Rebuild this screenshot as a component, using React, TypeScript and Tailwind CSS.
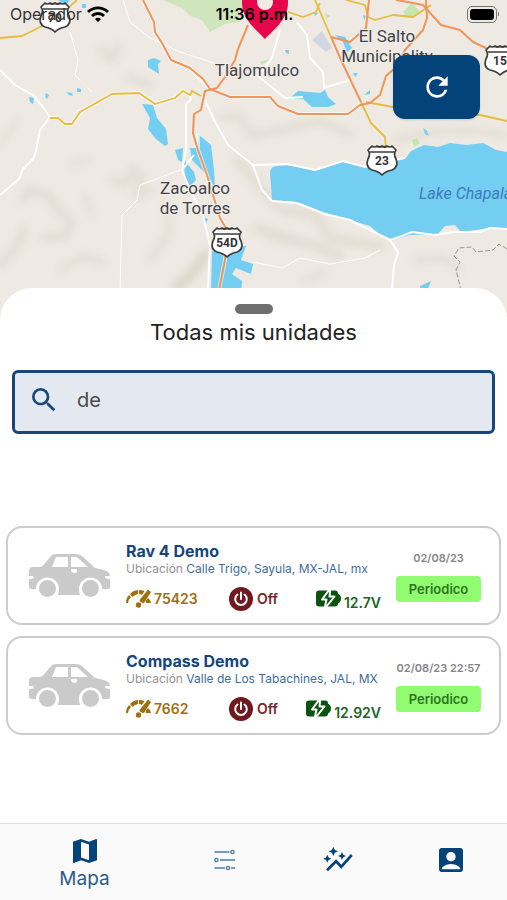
import React, { useState } from 'react';
import { MdAccountBox, MdAutoGraph, MdMap, MdRefresh, MdSearch, MdWifi } from 'react-icons/md';

interface Unit {
  id: number;
  name: string;
  location: string;
  odometer: string;
  engine: string;
  voltage: string;
  date: string;
  status: string;
}

const units: Unit[] = [
  { id: 1, name: 'Rav 4 Demo', location: 'Calle Trigo, Sayula, MX-JAL, mx', odometer: '75423', engine: 'Off', voltage: '12.7V', date: '02/08/23', status: 'Periodico' },
  { id: 2, name: 'Compass Demo', location: 'Valle de Los Tabachines, JAL, MX', odometer: '7662', engine: 'Off', voltage: '12.92V', date: '02/08/23 22:57', status: 'Periodico' },
];

function Shield({ x, y, label }: { x: number; y: number; label: string }) {
  return (
    <g transform={`translate(${x} ${y})`}>
      <path
        d="M-10-14 Q-8-12-5-14 Q-2.500-12 0-14 Q2.500-12 5-14 Q8-12 10-14 L14-10 Q11-6 14-1 Q17 7 10 10 Q4 11 0 15 Q-4 11-10 10 Q-17 7-14-1 Q-11-6-14-10 Z"
        fill="#fff"
        stroke="#3b3b3b"
        strokeWidth="1.700"
        strokeLinejoin="round"
      />
      <path d="M-12-8H12" stroke="#3b3b3b" strokeWidth="1.500" />
      <text y="5" textAnchor="middle" fontSize="12" fontWeight="700" fill="#333">{label}</text>
    </g>
  );
}

function MapView() {
  return (
    <svg
      viewBox="0 0 507 320"
      preserveAspectRatio="xMidYMin slice"
      className="block w-full h-full font-[Roboto,sans-serif]"
      role="img"
      aria-label="Mapa"
    >
      <defs>
        <filter id="soft" x="-20%" y="-20%" width="140%" height="140%">
          <feGaussianBlur stdDeviation="4" />
        </filter>
      </defs>
      <rect width="507" height="320" fill="#eee9e2" />

      {/* terrain */}
      <g filter="url(#soft)" fill="none" stroke="#dad6c8" strokeLinecap="round" strokeLinejoin="round" opacity="0.6">
        <path d="M100 48 L112 60 L120 45 M128 78 L150 84" strokeWidth="7" />
        <path d="M22 200 L30 190 L48 196 L60 212 L72 222 L64 236 L44 238 M0 265 L18 245 L24 228" strokeWidth="8" />
        <path d="M112 180 L125 185 L132 168 L142 178 L136 196 L150 190" strokeWidth="7" />
        <path d="M60 270 L84 256 L104 262 M150 260 L170 232 L166 205" strokeWidth="6" />
        <path d="M222 118 L240 116 L252 136 L280 130 L320 122 L350 134" strokeWidth="7" />
        <path d="M238 160 L258 185 L282 210 L315 215 L330 238 L380 246 M270 236 L310 244 L340 256 M256 228 L290 238" strokeWidth="9" />
        <path d="M176 288 L190 276 L206 254" strokeWidth="9" stroke="#c9c5b0" />
        <path d="M415 260 L445 258 L460 270 M305 280 L325 272 M395 140 L430 132 L470 130 L507 136 M380 180 L400 158" strokeWidth="6" />
        <path d="M0 145 L18 120 M70 165 L90 160 M85 195 L92 215" strokeWidth="5" />
      </g>
      <path d="M163 0 H243 L240 22 L225 24 L210 32 L202 20 L190 16 L182 8 Z" fill="#cfe5bb" />
      <path d="M403 12 L412 3 L420 12 L408 18 Z M325 13 l5 3 l-4 3 Z M412 140 l5-2 l3 5 l-6 4 Z M260 62 l10-3 l-8 6 Z" fill="#c5e5ae" />
      <path d="M312 40 L322 31 L332 48 L326 52 Z" fill="#d2d6e2" />

      {/* water */}
      <g fill="#74cef1">
        <path d="M270 172 Q271 166 277 166 L287 165 L315 170 L343 162 L365 167 L380 164 L406 158 L411 151 L424 145 L438 147 L450 143 L466 145 L483 143 L496 150 L507 152 V229 L490 228 L461 232 L455 225 L445 226 L438 234 L410 235 L390 241 L380 235 L370 226 L325 213 L297 202 L272 200 Z" />
        <path d="M148 60 L154 58 L161 61 L158 64 L159 74 L148 67 Z" />
        <path d="M142 104 L153 105 L157 118 L166 129 L168 144 L165 146 L156 139 L148 129 L150 118 Z" />
        <path d="M175 150 L183 148 L182 162 L178 160 Z M184 160 L194 172 L196 180 L190 186 L185 178 Z M198 134 L211 145 L214 170 L215 188 L209 178 L202 170 L192 160 L190 148 L198 148 Z" />
        <path d="M212 252 L220 248 L246 246 L241 260 L253 264 L251 274 L236 268 L232 274 L242 281 L241 292 H211 Z" />
        <path d="M290 98 L298 91 L320 93 L325 90 L328 97 L336 104 L328 107 L312 107 L303 99 Z" />
        <path d="M29 97 l5 1 l-1 6 l-3-2 Z M46 93 l3 2 l-2 4 l-2-2 Z M66 92 l6 1 l1 3 l-4-1 Z M77 88 l4 1 l0 3 l-4 0 Z M58 0 H70 L66 5 Z M82 4 h4 v4 h-4 Z" />
        <path d="M335 35 L345 37 L352 48 L347 52 L343 42 Z M314 13 l4 0 l-3 3 Z M363 15 l3 1 l-2 4 Z M285 50 l4 0 l0 4 l-3-1 Z M353 73 l5 0 l-3 4 Z M364 95 l6-5 l0 4 Z M423 128 l4 3 l2 5 l-4-2 Z M420 286 L431 281 L428 289 L420 290 Z M204 217 l4 2 l-2 4 l-2-3 Z" />
      </g>

      {/* minor roads */}
      <g fill="none" stroke="#fff" strokeWidth="2" strokeLinejoin="round">
        <path d="M0 70 L15 85 L33 95 L43 107 L50 117 L40 130 L36 150 L34 158 L22 170 L20 178 L0 195" />
        <path d="M190 96 L191 100 L186 104 L186 150 L182 170 L190 190 L203 215 L210 245 L208 290" />
        <path d="M205 100 L213 118 L228 145 L253 165 L262 190 L272 201 L297 203 L325 214 L350 220 L370 230 L390 240 L402 236 L412 232 L435 235 L453 232 L480 232 L490 228 L507 229" />
        <path d="M253 165 L287 164 L315 170 L343 161 L365 167 L385 162 L405 158" />
        <path d="M390 240 L398 252 L394 265 L392 290 M280 30 L272 58 L258 76 L285 98 L303 97" />
        <path d="M297 22 L307 35 L310 58 L323 72 L324 88 L350 80 M182 170 L194 155" />
        <path d="M123 0 L130 22 L150 38 L180 52 L220 65 M70 32 L78 60 L75 75 L92 92" strokeWidth="1" />
        <path d="M120 290 L122 215 L137 200 L140 185 L180 170 M253 262 L282 268 L300 258 L330 264 L365 258 L380 250" strokeWidth="1" />
      </g>
      <path d="M507 249 L499 244 L493 250 L476 252 L472 247 L459 248 L454 256 L460 262 L456 270 L461 290" fill="none" stroke="#9a9894" strokeDasharray="5 2" />

      {/* highways */}
      <g fill="none" stroke="#fff" strokeWidth="4" strokeLinejoin="round" opacity="0.6">
        <path d="M143 0 L154 22 L155 32 L171 60 L190 68 L210 89 L230 97 H270 L278 106 L298 114 H348 L360 105" />
        <path d="M50 118 H58 L65 124 H72 L80 112 L112 94 L139 93 L155 104 L175 98 L183 91 L190 95" />
        <path d="M198 134 L198 150 L207 175 L213 195 L220 218 L227 230 L225 260 L219 290" />
      </g>
      <g fill="none" stroke="#e6bd3c" strokeWidth="1.800" strokeLinejoin="round">
        <path d="M0 38 L22 36 L40 27 L60 15 L77 0" />
        <path d="M50 118 H58 L65 124 H72 L80 112 L112 94 L139 93 L155 104 L175 98 L183 91 L190 95 L192 91 L201 96" />
        <path d="M288 12 L303 17 L316 12 L320 3 M346 0 L365 5 L368 17 L375 20 L393 15 L413 17 L431 5" />
        <path d="M315 0 L331 37 M361 102 L371 123 L385 137 L386 150 M366 102 L393 107 L480 115 L507 121" />
      </g>
      <g fill="none" stroke="#f09557" strokeWidth="2" strokeLinejoin="round">
        <path d="M143 0 L154 22 L155 32 L162 43 L171 60 L190 68 L203 79 L210 89 L230 97 H270 L278 106 L298 114 H348 L360 105 L370 103 L380 95 L386 76 L395 68 L405 50 L423 30 L427 18 L426 0" />
        <path d="M248 25 L238 49 L235 60 L225 77 L217 88 L205 91 L201 110 L194 114 L193 133 L198 150 L207 175 L213 195 L220 218 L227 230 L225 260 L219 290" />
        <path d="M331 37 L341 60 L361 102 M331 37 L350 42 L366 28 L369 0" />
        <path d="M396 0 L408 2 L423 5 L441 25 L460 30 L473 42 L488 49" />
      </g>

      <g fill="#41424a" stroke="#f3efe9" strokeWidth="2" paintOrder="stroke" fontSize="17" textAnchor="middle">
        <text x="257" y="76">Tlajomulco</text>
        <text x="387" y="42">El Salto</text>
        <text x="387" y="62">Municipality</text>
        <text x="195" y="194">Zacoalco</text>
        <text x="195" y="214">de Torres</text>
      </g>
      <text x="419" y="199" fontSize="16" fontStyle="italic" fill="#3f79bd">Lake Chapala</text>

      <Shield x={55} y={17} label="70" />
      <Shield x={382} y={160} label="23" />
      <Shield x={227} y={242} label="54D" />
      <Shield x={500} y={60} label="15" />

      <path d="M265 39 C258 31 242 20 242 3 V-8 H288 V3 C288 20 272 31 265 39 Z" fill="#e8064b" />
      <circle cx="265" cy="2" r="8" fill="#f3ece6" />
    </svg>
  );
}

function CarIcon() {
  return (
    <svg viewBox="0 0 82 46" className="w-full" fill="#cacaca" aria-hidden="true">
      <path
        fillRule="evenodd"
        d="M23 2 Q25 1 27 1 H46 Q51 1 54 4 L66 15 L75 17 Q81 19 81 23 H76 Q75 26 81 26 V34 Q81 36 78 36 H73 A11.500 11.500 0 0 0 50 36 Q50 39 51 42 H29 Q30 39 30 36 A11.500 11.500 0 0 0 7 36 H3 Q0 36 0 33 V26 H3 Q6 25 4 23 H0 V18 Q0 14 4 14 H12 Q15 12 17 9 Z M27 4 L23 14 H39 V4 Z M42 4 V14 H59 L49 5 Q48 4 46 4 Z M42 16 V18 Q43 20 46 20 Q48 20 48 18 V16 Z"
      />
      <circle cx="18.500" cy="35.500" r="8.500" />
      <circle cx="61.500" cy="35.500" r="8.500" />
    </svg>
  );
}

function GaugeIcon() {
  return (
    <svg viewBox="0 0 26 19" className="w-[26px] shrink-0" fill="#a0700f" aria-hidden="true">
      <path d="M0 14 Q0 9 3 6 L5 8 Q2 11 2 14 Z" />
      <path d="M4 5 Q7 1.500 12 1 L12 5 Q9 5.500 6.500 8 Z" />
      <path d="M13 1 Q16 1 18.500 2 L16 6 Q14.500 5 13 5 Z" />
      <path d="M22 0.500 L25 3 L18 14 Q14 14 13.500 11 Z" />
      <path d="M22 9 Q25 11 25 14 H20 Q20 12 19.500 12 Z" />
      <circle cx="12.500" cy="16" r="2.700" />
    </svg>
  );
}

function PowerIcon() {
  return (
    <svg viewBox="0 0 24 24" className="w-6 shrink-0" fill="none" stroke="#fff" strokeWidth="2" strokeLinecap="round" aria-hidden="true">
      <circle cx="12" cy="12" r="12" fill="#701a20" stroke="none" />
      <path d="M8.500 7.500 A5.800 5.800 0 1 0 15.500 7.500 M12 5.500 V12" />
    </svg>
  );
}

function BatteryIcon() {
  return (
    <svg viewBox="0 0 26 20" className="w-[26px] shrink-0" fill="#0b5310" aria-hidden="true">
      <rect x="0" y="1.500" width="22" height="16" rx="3" />
      <path d="M21 4 Q25 5.500 25 9.500 Q25 13.500 21 15 Z" />
      <path d="M14.500 -1 L6 10.500 H10.500 L8.500 20 L18.500 7.500 H13.500 Z" stroke="#fff" strokeWidth="2" strokeLinejoin="round" />
    </svg>
  );
}

function SlidersIcon() {
  return (
    <svg viewBox="0 0 22 22" className="w-[22px]" fill="none" stroke="#4c7ca5" strokeWidth="1.400" aria-hidden="true">
      <path d="M0.500 3 H15.500 M6 11 H21 M0.500 19 H11 M17 19 H21" />
      <circle cx="18.500" cy="3" r="1.600" />
      <circle cx="2.500" cy="11" r="1.600" />
      <circle cx="14" cy="19" r="1.600" />
    </svg>
  );
}

function UnitCard({ unit }: { unit: Unit }) {
  return (
    <li className="flex min-h-[99px] items-center rounded-2xl border-2 border-[#cccccc] bg-white py-2 pl-[21px] pr-[18px]">
      <div className="w-[82px] shrink-0">
        <CarIcon />
      </div>
      <div className="min-w-0 flex-1 ml-[15px] mr-[15px]">
        <h2 className="text-base leading-5 font-bold text-[#15457c]">{unit.name}</h2>
        <p className="text-xs leading-4 whitespace-nowrap text-[#939393]">
          Ubicación <span className="text-[#3d6d9d]">{unit.location}</span>
        </p>
        <div className="mt-2.5 grid grid-cols-3 items-center text-sm leading-6 font-semibold">
          <span className="flex items-center gap-0.5 text-[#a0700f]">
            <GaugeIcon />
            {unit.odometer}
          </span>
          <span className="flex items-center justify-center gap-1 text-[#7c242b]">
            <PowerIcon />
            {unit.engine}
          </span>
          <span className="flex items-center justify-end gap-0.5 text-[#20641f]">
            <BatteryIcon />
            <span className="pt-2 leading-4">{unit.voltage}</span>
          </span>
        </div>
      </div>
      <div className="w-[85px] shrink-0 flex flex-col items-center gap-2.5">
        <span className="text-[11px] leading-4 font-semibold whitespace-nowrap text-[#858585]">{unit.date}</span>
        <span className="w-full rounded bg-[#91fc72] text-center text-[13px] leading-[26px] font-semibold text-[#2d7420]">{unit.status}</span>
      </div>
    </li>
  );
}

export default function App() {
  const [search, setSearch] = useState('de');

  return (
    <div className="flex min-h-screen flex-col bg-white font-[Inter,sans-serif]">
      <header className="relative h-80 overflow-hidden">
        <MapView />
        <div className="absolute inset-x-0 top-0 grid grid-cols-3 items-center pl-2.5 pr-2 pt-0.5 text-base text-black">
          <span className="flex items-center gap-1 text-[#333333]">
            Operador
            <MdWifi className="w-6 h-6 text-black" />
          </span>
          <span className="text-center font-semibold">11:36 p.m.</span>
          <span className="flex items-center justify-end gap-px">
            <span className="rounded-[5px] border border-[#77736f] p-0.5">
              <span className="block h-[11px] w-6 rounded-[3px] bg-black" />
            </span>
            <span className="h-1 w-px rounded bg-[#77736f]" />
          </span>
        </div>
        <button
          aria-label="Actualizar"
          className="absolute right-[27px] top-[55px] flex h-16 w-[87px] items-center justify-center rounded-xl bg-[#04427a] text-white shadow"
        >
          <MdRefresh className="h-8 w-8" />
        </button>
      </header>

      <main className="relative -mt-8 flex-1 rounded-t-[32px] bg-white px-1.5 pb-8 pt-4">
        <div className="mx-auto h-2.5 w-[38px] rounded-full bg-[#6f6f6f]" />
        <h1 className="mt-1 text-center text-[22px] leading-7 text-[#222222]">Todas mis unidades</h1>

        <div className="mx-1.5 mt-6 flex h-16 items-center rounded-md border-[3px] border-[#1b4679] bg-[#e4e8f0] pb-1">
          <label htmlFor="unit-search" className="ml-[13px] shrink-0">
            <MdSearch className="h-8 w-8 text-[#15477f]" />
          </label>
          <input
            id="unit-search"
            type="text"
            aria-label="Buscar unidad"
            value={search}
            onChange={(e) => setSearch(e.target.value)}
            className="ml-[17px] min-w-0 flex-1 bg-transparent pr-4 text-xl text-[#4a4a4a] outline-none"
          />
        </div>

        <ul className="mt-[92px] space-y-[11px]">
          {units.map((unit) => (
            <UnitCard key={unit.id} unit={unit} />
          ))}
        </ul>
      </main>

      <nav className="flex min-h-[77px] items-stretch border-t border-[#dedede] bg-[#fafafa] pb-1 text-[#04427a]">
        <button className="flex flex-[3] flex-col items-center pt-[11px]">
          <MdMap className="h-8 w-8" />
          <span className="text-[19px] leading-6 text-[#2b5c8f]">Mapa</span>
        </button>
        <button aria-label="Ajustes" className="flex flex-[2] items-center justify-center">
          <SlidersIcon />
        </button>
        <button aria-label="Estadísticas" className="flex flex-[2] items-center justify-center">
          <MdAutoGraph className="h-8 w-8" />
        </button>
        <button aria-label="Cuenta" className="flex flex-[2] items-center justify-center">
          <MdAccountBox className="h-8 w-8" />
        </button>
      </nav>
    </div>
  );
}
